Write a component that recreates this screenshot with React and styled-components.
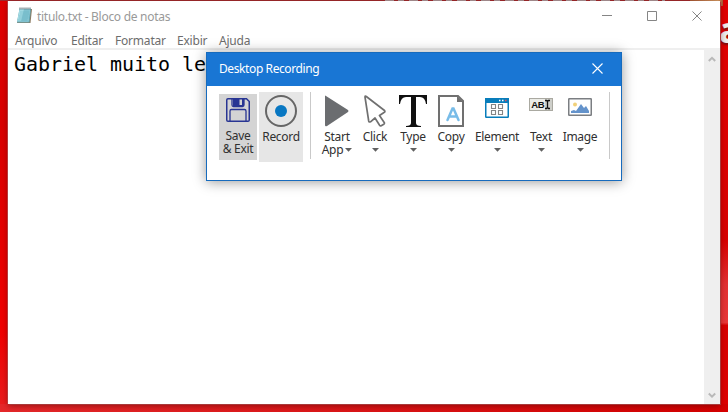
import React from 'react';
import styled, { createGlobalStyle } from 'styled-components';

const Global = createGlobalStyle`
  * { box-sizing: border-box; }
  body { margin: 0; overflow: hidden; }
`;

const Desktop = styled.main`
  position: relative;
  width: 728px;
  height: 412px;
  padding: 1px 8px 8px;
  overflow: hidden;
  background:
    linear-gradient(#9f2a2d, #9f2a2d) 0 0 / 720px 1px no-repeat,
    linear-gradient(#e00000 0%, #d90000 30%, #e60000 60%, #f00000 80%, #e91f20 100%);
  font-family: "Noto Sans", "Open Sans", sans-serif;
  font-size: 12px;
`;

const WallpaperRight = styled.div`
  position: absolute;
  left: 720px;
  top: 0;
  width: 8px;
  height: 412px;
  background: linear-gradient(#e00000 0 20%, #d80000 58%, #e23032 69%, #e93738 78.3%, #d80000 79%, #e00000);
`;

const WallpaperBottom = styled.div`
  position: absolute;
  left: 0;
  top: 404px;
  width: 728px;
  height: 8px;
  background: linear-gradient(90deg, #e5282a, #dd1719 45%, #d50000);
`;

const WallpaperLetter = styled.span`
  position: absolute;
  left: 719px;
  top: 10px;
  color: #eee;
  font: bold 36px/40px "Open Sans", sans-serif;
  text-shadow: 0 2px 2px #7d1010;
`;

const WallpaperTop = styled.div`
  position: absolute;
  left: 385px;
  top: 0;
  width: 280px;
  height: 1px;
  background: repeating-linear-gradient(90deg, #a9999b 0 9px, #9f2a2d 9px 13px, #a9999b 13px 19px, #9f2a2d 19px 24px);
`;

const WallpaperCorner = styled.div`
  position: absolute;
  left: 690px;
  top: 0;
  width: 33px;
  height: 6px;
  background: linear-gradient(90deg, #a75b35, #d19b63 85%, #a85532);
`;

const Notepad = styled.section`
  position: relative;
  display: flex;
  flex-direction: column;
  width: 712px;
  height: 403px;
  background: #fff;
  box-shadow: 1px 1px 0 0 #a83a3a, -1px 0 0 0 #b83a3a, 0 2px 6px #5008;
`;

const TitleBar = styled.header`
  display: flex;
  align-items: center;
  height: 29px;
  padding: 0 1px 0 8px;
  color: #999;
`;

const Title = styled.span`
  flex: 1;
  margin-left: 4px;
  padding-top: 1px;
  font-size: 12px;
  letter-spacing: -0.29px;
`;

const WindowButton = styled.span`
  display: grid;
  width: 45px;
  height: 29px;
  place-items: center;
`;

const MenuBar = styled.nav`
  display: flex;
  height: 18px;
  padding: 2px 0 0 7px;
  color: #6d6d6d;
  line-height: 18px;
`;

const MenuItem = styled.span`
  width: ${({ $width }) => $width}px;
  letter-spacing: -0.2px;
  white-space: nowrap;
`;

const Editor = styled.div`
  display: flex;
  flex: 1;
  border-top: 2px solid #efefef;
`;

const Document = styled.div`
  flex: 1;
  padding: 2px 6px;
  color: #000;
  font: 20px/24px "DejaVu Sans Mono", monospace;
  letter-spacing: -0.04px;
  white-space: pre;
`;

const ScrollBar = styled.div`
  display: flex;
  flex-direction: column;
  align-items: center;
  justify-content: space-between;
  width: 16px;
  padding: 6px 1px 5px 0;
  background: #efefef;
`;

const Recorder = styled.section`
  position: absolute;
  left: 206px;
  top: 52px;
  width: 416px;
  height: 129px;
  border: 1px solid #176bbd;
  background: #fff;
  box-shadow: 0 1px 12px #0006;
`;

const RecorderTitle = styled.header`
  display: flex;
  align-items: center;
  justify-content: space-between;
  height: 33px;
  padding: 0 18px 2px 12px;
  background: #1976d4;
  color: #fff;
  letter-spacing: -0.4px;
`;

const Toolbar = styled.div`
  display: flex;
  align-items: flex-start;
  padding: 6px 0 0 12px;
`;

const Divider = styled.span`
  width: 1px;
  height: 67px;
  margin-left: ${({ $gap }) => $gap}px;
  background: #c9c9c9;
`;

const Tool = styled.div`
  display: flex;
  flex-direction: column;
  align-items: center;
  width: ${({ $width }) => $width}px;
  height: ${({ $height = 70 }) => $height}px;
  margin: ${({ $top = 0 }) => $top}px 0 0 ${({ $gap = 0 }) => $gap}px;
  background: ${({ $fill = 'transparent' }) => $fill};
  color: #303030;
  line-height: 13px;
  text-align: center;
`;

const IconSlot = styled.span`
  display: flex;
  align-items: flex-start;
  justify-content: center;
  height: ${({ $height = 38 }) => $height}px;
  padding-top: ${({ $top = 3 }) => $top}px;
  svg { display: block; }
`;

const Label = styled.span`
  letter-spacing: ${({ $track = -0.3 }) => $track}px;
  white-space: nowrap;
`;

const LabelRow = styled.span`
  display: flex;
  align-items: center;
  gap: 2px;
`;

const ArrowShape = styled.svg`
  display: block;
  flex: none;
  margin-top: ${({ $top = 0 }) => $top}px;
`;

const Arrow = ({ top }) => (
  <ArrowShape $top={top} width="7" height="4" viewBox="0 0 7 4"><path d="M0 0h7L3.5 3.7z" fill="#606060" /></ArrowShape>
);

const NotepadIcon = () => (
  <svg width="17" height="17" viewBox="0 0 17 17">
    <path d="M4 2h12l-1.5 14H1z" fill="#8b7a60" />
    <path d="M3.5 2H15l-1.5 13.5H1z" fill="#62a9b8" />
    <path d="M3.5 2H14l-1.5 12.5H1z" fill="#a3dae3" />
    <path d="M8 2h6l-1.5 12.5H5z" fill="#80c2d0" />
    <path d="M4 5h9M4 7h9M3 9h9M3 11h9M2 13h9" stroke="#67b1c1" strokeWidth=".5" />
    <path d="M4 .5v2M6 .5v2M8 .5v2M10 .5v2M12 .5v2M14 .5v2" stroke="#4b646c" />
  </svg>
);

const Cross = ({ size = 11, color = '#858585' }) => (
  <svg width={size} height={size} viewBox="0 0 11 11">
    <path d="M.5.5l10 10M10.5.5l-10 10" stroke={color} strokeWidth="1.1" />
  </svg>
);

const Chevron = ({ down }) => (
  <svg width="8" height="7" viewBox="0 0 8 7">
    <path d={down ? 'M.8 1.5L4 4.7l3.2-3.2' : 'M.8 5L4 1.8 7.2 5'} fill="none" stroke="#b9b9b9" strokeWidth="2" />
  </svg>
);

const SaveIcon = () => (
  <svg width="24" height="24" viewBox="0 0 24 24">
    <path d="M.75 2q0-1.25 1.25-1.25h18.5L23.25 3.5V22q0 1.25-1.25 1.25H2Q.75 23.25.75 22z" fill="none" stroke="#283593" strokeWidth="1.5" />
    <path d="M6 .75V7q0 1.5 1.5 1.5h9Q18 8.500 18 7V.75" fill="none" stroke="#283593" strokeWidth="1.3" />
    <path d="M7 1h6.500v7H7zM16 1h2v7h-4.500V7H16z" fill="#283593" />
    <path d="M4 23V13q0-1.500 1.500-1.500h13Q20 11.500 20 13v10" fill="none" stroke="#283593" strokeWidth="1.3" />
  </svg>
);

const RecordIcon = () => (
  <svg width="32" height="32" viewBox="0 0 32 32">
    <circle cx="16" cy="16" r="15" fill="none" stroke="#666" strokeWidth="2" />
    <circle cx="16" cy="16" r="6" fill="#0877c2" />
  </svg>
);

const StartIcon = () => (
  <svg width="24" height="32" viewBox="0 0 24 32"><path d="M0 1q0-1 1 0l22 14q1 1 0 2L2 31q-2 1-2-1z" fill="#6b6d70" /></svg>
);

const ClickIcon = () => (
  <svg width="22" height="32" viewBox="0 0 22 32">
    <path d="M1 2Q1 .5 2.300 1.500L20.500 15.500Q21.500 17 20 17.500L15.500 20.500 20.200 27.500Q20.800 28.500 19.800 29.200L17.200 30.800Q16.200 31.200 15.600 30.300L11 23 6.500 26.800Q5 27.500 4.700 26z" fill="#fff" stroke="#707070" strokeWidth="1.7" strokeLinejoin="round" />
  </svg>
);

const TypeIcon = () => (
  <svg width="28" height="32" viewBox="0 0 28 32">
    <path d="M0 0h28v9h-1q-1-7-6-7h-4v26q0 3 5 3v1H7v-1q5 0 5-3V2H7Q2 2 1 9H0z" fill="#101010" />
  </svg>
);

const CopyIcon = () => (
  <svg width="26" height="32" viewBox="0 0 26 32">
    <path d="M1 1h19l5 5v25H1z" fill="none" stroke="#707070" strokeWidth="2" /><path d="M19 1v6h6z" fill="#707070" />
    <path d="M9.500 25l5-11.500h1L20.500 25M11.500 21.500h7.500" fill="none" stroke="#78bce8" strokeWidth="2.5" strokeLinecap="round" />
  </svg>
);

const ElementIcon = () => (
  <svg width="24" height="20" viewBox="0 0 24 20">
    <rect x=".75" y=".75" width="22.5" height="18.5" rx=".5" fill="#fff" stroke="#087dbb" strokeWidth="1.5" />
    <path d="M0 0h24v5H0z" fill="#087dbb" />
    <path d="M14 2.5h1.5M17 2.5h1.5" stroke="#fff" strokeWidth="1.5" /><path d="M20 2.5h1.5" stroke="#e34d58" strokeWidth="1.5" />
    <path d="M6.5 6.500h4v4h-4zM13.500 6.500h4v4h-4zM6.500 12.500h4v4h-4zM13.500 12.500h4v4h-4z" fill="none" stroke="#858585" strokeWidth="1.1" />
  </svg>
);

const TextIcon = () => (
  <svg width="24" height="13" viewBox="0 0 24 13">
    <rect x=".5" y=".5" width="23" height="12" fill="#ebece7" stroke="#aaa9a1" /><path d="M16 1h7v11h-7z" fill="#cecfca" />
    <text x="2.2" y="10" fontFamily="Liberation Sans" fontSize="9.5" fontWeight="bold" textLength="13.5" fill="#111">AB</text>
    <path d="M16 2.5h1.5l1 1 1-1H21M18.5 3v7M16 10.5h1.5l1-1 1 1H21" fill="none" stroke="#111" strokeWidth="1.3" />
  </svg>
);

const ImageIcon = () => (
  <svg width="24" height="18" viewBox="0 0 24 18">
    <rect x=".75" y=".75" width="22.5" height="16.5" rx=".5" fill="#fff" stroke="#7b7e82" strokeWidth="1.5" />
    <circle cx="7" cy="6.5" r="2" fill="#f1d17a" />
    <path d="M3 15v-2l3-1 2 1 5-7 3 4 2-2 3 5v2z" fill="#6493cb" />
  </svg>
);

const tools = [
  { name: 'Click', width: 36, gap: 2, icon: <ClickIcon />, top: 1 },
  { name: 'Type', width: 36, gap: 2, icon: <TypeIcon />, top: 1 },
  { name: 'Copy', width: 36, gap: 2, icon: <CopyIcon />, top: 1 },
  { name: 'Element', width: 48, gap: 4, icon: <ElementIcon />, top: 4 },
  { name: 'Text', width: 36, gap: 2, icon: <TextIcon />, top: 4 },
  { name: 'Image', width: 36, gap: 3, icon: <ImageIcon />, top: 4 },
];

export default function App() {
  return (
    <>
      <Global />
      <Desktop>
        <WallpaperRight /><WallpaperBottom /><WallpaperTop /><WallpaperCorner />
        <WallpaperLetter>a</WallpaperLetter>
        <Notepad>
          <TitleBar>
            <NotepadIcon />
            <Title>titulo.txt - Bloco de notas</Title>
            <WindowButton><svg width="10" height="1"><path d="M0 .5h10" stroke="#858585" /></svg></WindowButton>
            <WindowButton><svg width="10" height="10"><path d="M.5.5h9v9h-9z" fill="none" stroke="#858585" /></svg></WindowButton>
            <WindowButton><Cross size={10} /></WindowButton>
          </TitleBar>
          <MenuBar>
            <MenuItem $width={56}>Arquivo</MenuItem>
            <MenuItem $width={44}>Editar</MenuItem>
            <MenuItem $width={62}>Formatar</MenuItem>
            <MenuItem $width={42}>Exibir</MenuItem>
            <MenuItem $width={40}>Ajuda</MenuItem>
          </MenuBar>
          <Editor>
            <Document>Gabriel muito le</Document>
            <ScrollBar><Chevron /><Chevron down /></ScrollBar>
          </Editor>
        </Notepad>
        <Recorder>
          <RecorderTitle><span>Desktop Recording</span><Cross color="#fff" /></RecorderTitle>
          <Toolbar>
            <Tool $width={38} $height={66} $top={2} $fill="#d4d4d4">
              <IconSlot $height={35} $top={4}><SaveIcon /></IconSlot>
              <Label>Save</Label><Label>&amp; Exit</Label>
            </Tool>
            <Tool $width={44} $gap={2} $fill="#e6e6e6">
              <IconSlot><RecordIcon /></IconSlot><Label>Record</Label>
            </Tool>
            <Divider $gap={7} />
            <Tool $width={36} $gap={8}>
              <IconSlot><StartIcon /></IconSlot><Label>Start</Label>
              <LabelRow><Label>App</Label><Arrow /></LabelRow>
            </Tool>
            {tools.map((tool) => (
              <Tool key={tool.name} $width={tool.width} $gap={tool.gap}>
                <IconSlot $top={tool.top + 2}>{tool.icon}</IconSlot>
                <Label>{tool.name}</Label><Arrow top={5} />
              </Tool>
            ))}
            <Divider $gap={11} />
          </Toolbar>
        </Recorder>
      </Desktop>
    </>
  );
}
